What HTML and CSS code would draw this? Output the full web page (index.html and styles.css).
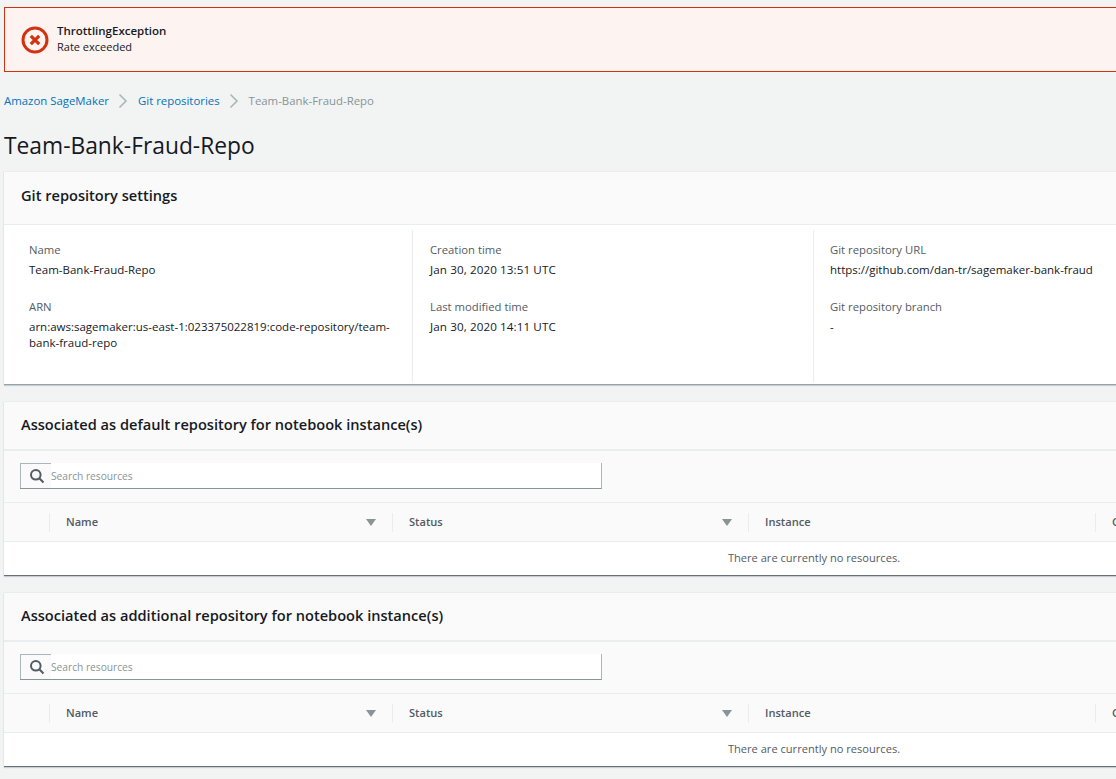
FILE: index.html
```html
<!DOCTYPE html>
<html lang="en">

<head>
    <meta charset="UTF-8">
    <title>Team-Bank-Fraud-Repo</title>
    <link rel="stylesheet" href="styles.css">
</head>

<body>
    <div class="alert">
        <svg class="alert-icon" width="28" height="28" viewBox="0 0 28 28">
            <circle cx="14" cy="14" r="12" fill="none" stroke="#d13212" stroke-width="3"></circle>
            <path d="M9.8 9.8l8.4 8.4M18.2 9.8l-8.4 8.4" fill="none" stroke="#d13212" stroke-width="3.2"></path>
        </svg>
        <div class="alert-body">
            <div class="alert-title">ThrottlingException</div>
            <div class="alert-text">Rate exceeded</div>
        </div>
    </div>

    <nav class="crumbs">
        <a href="#">Amazon SageMaker</a>
        <svg class="crumb-sep" width="10" height="16" viewBox="0 0 10 16"><path d="M1.5 1.5L8 8l-6.500 6.500" fill="none" stroke="#aab7b8" stroke-width="1.600"></path></svg>
        <a href="#">Git repositories</a>
        <svg class="crumb-sep" width="10" height="16" viewBox="0 0 10 16"><path d="M1.5 1.5L8 8l-6.500 6.500" fill="none" stroke="#aab7b8" stroke-width="1.600"></path></svg>
        <span class="crumb-current">Team-Bank-Fraud-Repo</span>
    </nav>

    <h1>Team-Bank-Fraud-Repo</h1>

    <section class="panel settings">
        <h2 class="panel-head">Git repository settings</h2>
        <div class="details">
            <div class="col col-first">
                <div class="label">Name</div>
                <div class="value">Team-Bank-Fraud-Repo</div>
                <div class="label">ARN</div>
                <div class="value">arn:aws:sagemaker:us-east-1:023375022819:code-repository/team-bank-fraud-repo</div>
            </div>
            <div class="col">
                <div class="label">Creation time</div>
                <div class="value date">Jan 30, 2020 13:51 UTC</div>
                <div class="label">Last modified time</div>
                <div class="value date">Jan 30, 2020 14:11 UTC</div>
            </div>
            <div class="col col-last">
                <div class="label">Git repository URL</div>
                <div class="value">https://github.com/dan-tr/sagemaker-bank-fraud</div>
                <div class="label">Git repository branch</div>
                <div class="value">-</div>
            </div>
        </div>
    </section>

    <section class="panel">
        <h2 class="panel-head table-head">Associated as default repository for notebook instance(s)</h2>
        <div class="search-row">
            <div class="search">
                <span class="search-icon">
                    <svg width="16" height="16" viewBox="0 0 16 16"><circle cx="6.800" cy="6.800" r="4.800" fill="none" stroke="#545b64" stroke-width="2"></circle><path d="M10.300 10.300L14.500 14.500" stroke="#545b64" stroke-width="2"></path></svg>
                </span>
                <span class="search-text">Search resources</span>
            </div>
        </div>
        <div class="tbl">
            <div class="tbl-row">
                <div class="th th-check"></div>
                <div class="th th-name">Name <span class="sort"></span></div>
                <div class="th th-status">Status <span class="sort"></span></div>
                <div class="th th-instance">Instance</div>
                <div class="th">Creation time</div>
            </div>
            <div class="empty">There are currently no resources.</div>
        </div>
    </section>

    <section class="panel">
        <h2 class="panel-head table-head">Associated as additional repository for notebook instance(s)</h2>
        <div class="search-row">
            <div class="search">
                <span class="search-icon">
                    <svg width="16" height="16" viewBox="0 0 16 16"><circle cx="6.800" cy="6.800" r="4.800" fill="none" stroke="#545b64" stroke-width="2"></circle><path d="M10.300 10.300L14.500 14.500" stroke="#545b64" stroke-width="2"></path></svg>
                </span>
                <span class="search-text">Search resources</span>
            </div>
        </div>
        <div class="tbl">
            <div class="tbl-row">
                <div class="th th-check"></div>
                <div class="th th-name">Name <span class="sort"></span></div>
                <div class="th th-status">Status <span class="sort"></span></div>
                <div class="th th-instance">Instance</div>
                <div class="th">Creation time</div>
            </div>
            <div class="empty">There are currently no resources.</div>
        </div>
    </section>
</body>

</html>
```

FILE: styles.css
```css
/* Basic Reset */
* {
    margin: 0;
    padding: 0;
    box-sizing: border-box;
}

html,
body {
    height: 100%;
    overflow: hidden;
}

body {
    font-family: 'Open Sans', sans-serif;
    font-size: 11.4px;
    line-height: 16px;
    background-color: #f2f3f3;
    color: #16191f;
    width: 1624px;
    padding: 7px 0 0 4px;
}

/* Error banner */
.alert {
    display: flex;
    align-items: center;
    height: 65px;
    padding-left: 16px;
    background-color: #fdf3f1;
    border: 1px solid #d13212;
}

.alert-icon {
    margin-right: 8px;
}

.alert-body {
    padding-bottom: 2px;
}

.alert-title {
    font-size: 11.5px;
    font-weight: 600;
}

.alert-text {
    font-size: 11px;
    color: #16191f;
}

/* Breadcrumbs */
.crumbs {
    display: flex;
    align-items: center;
    height: 16px;
    margin-top: 21px;
}

.crumbs a {
    color: #0073bb;
    text-decoration: none;
}

.crumb-sep {
    margin: 0 10px 0 9px;
}

.crumb-current {
    color: #879596;
}

h1 {
    font-size: 22.8px;
    font-weight: 400;
    line-height: 30px;
    margin-top: 22px;
    margin-bottom: 11px;
}

/* Panels */
.panel {
    background-color: #fff;
    border-bottom: 1px solid #687078;
    box-shadow: 0 1px 1px rgba(0, 31, 63, 0.15), 0 0 1px rgba(0, 31, 63, 0.2);
    margin-bottom: 17px;
    overflow: hidden;
}

.panel-head {
    height: 53px;
    padding: 14px 0 0 17px;
    font-size: 14.6px;
    font-weight: 600;
    line-height: 18px;
    background-color: #fafafa;
    border-bottom: 1px solid #eaeded;
}

.table-head {
    height: 49px;
    padding-top: 13px;
    border-bottom-width: 2px;
}

.settings {
    height: 213px;
    border-bottom-color: #95a5a6;
}

.details {
    display: flex;
    padding-top: 5px;
}

.col {
    width: 401px;
    height: 152px;
    padding: 12px 16px 0 17px;
    border-right: 1px solid #eaeded;
}

.col-first {
    width: 409px;
    padding-left: 25px;
}

.col-last {
    padding-left: 16px;
    border-right: none;
}

.label {
    font-size: 11.3px;
    color: #545b64;
    margin-bottom: 4px;
}

.value {
    font-size: 11.5px;
    margin-bottom: 21px;
}

.date {
    font-size: 11.65px;
    letter-spacing: 0.1px;
}

/* Search */
.search-row {
    height: 51px;
    padding: 12px 0 0 16px;
    background-color: #fafafa;
}

.search {
    display: flex;
    align-items: center;
    width: 582px;
    height: 26px;
    background-color: #fff;
    border-bottom: 1px solid #879596;
    border-right: 1px solid #aab7b8;
}

.search-icon {
    display: flex;
    align-items: center;
    width: 31px;
    height: 25px;
    padding-left: 8px;
    background-color: #fafafa;
    border: 1px solid #aab7b8;
    border-right: none;
    border-bottom: none;
}

.search-text {
    color: #879596;
    font-size: 10.2px;
}

/* Table */
.tbl-row {
    display: flex;
    height: 40px;
    align-items: center;
    background-color: #fafafa;
    border-top: 1px solid #eaeded;
    border-bottom: 1px solid #eaeded;
}

.th {
    display: flex;
    align-items: center;
    justify-content: space-between;
    height: 19px;
    padding: 0 16px;
    font-size: 11.1px;
    font-weight: 600;
    color: #545b64;
    border-left: 1px solid #eaeded;
}

.th-check {
    width: 45px;
    border-left: none;
    border-right: none;
}

.th-name {
    width: 343px;
}

.th-status {
    width: 356px;
}

.th-instance {
    width: 347px;
}

.sort {
    width: 0;
    height: 0;
    border-left: 5px solid transparent;
    border-right: 5px solid transparent;
    border-top: 7px solid #879596;
}

.empty {
    height: 33px;
    font-size: 11.1px;
    line-height: 32px;
    text-align: center;
    color: #545b64;
}
```
